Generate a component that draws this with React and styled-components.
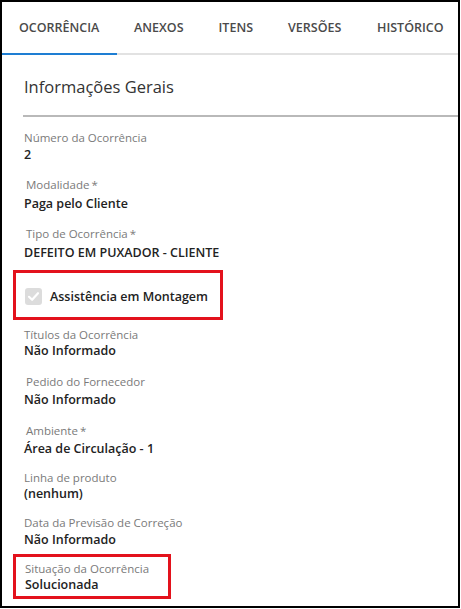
import React from "react";
import styled, { createGlobalStyle } from "styled-components";

const Global = createGlobalStyle`
  html, body { margin: 0; padding: 0; background: #fff; }
  body { font-family: "Open Sans", "DejaVu Sans", sans-serif; }
  * { box-sizing: border-box; }
`;

const Frame = styled.div`
  width: 460px;
  height: 608px;
  border: 2px solid #000;
  background: #fff;
  overflow: hidden;
  display: flex;
  flex-direction: column;
`;

const TabBar = styled.div`
  display: flex;
  height: 53px;
  border-bottom: 2px solid #e2e2e2;
`;

const Tab = styled.div`
  display: flex;
  align-items: center;
  padding: 0 18px 0 17px;
  margin-bottom: -2px;
  border-bottom: 2px solid ${(p) => (p.$active ? "#1e7ed3" : "transparent")};
  font-size: 12.5px;
  font-weight: 600;
  color: #4a4a4a;
  white-space: nowrap;
  width: ${(p) => p.$w}px;
`;

const Content = styled.div`
  padding-left: 21px;
  display: flex;
  flex-direction: column;
`;

const SectionTitle = styled.div`
  font-size: 16.5px;
  color: #333;
  padding-top: 20px;
  height: 62px;
  border-bottom: 2px solid #b9b9b9;
  padding-left: 1px;
`;

const Fields = styled.div`
  display: flex;
  flex-direction: column;
  padding-top: 13px;
`;

const Field = styled.div`
  display: flex;
  flex-direction: column;
  padding-left: 1px;
  height: ${(p) => p.$h}px;
`;

const Label = styled.div`
  font-size: 11.5px;
  color: #7a7a7a;
  line-height: 16px;
  padding-left: ${(p) => (p.$indent ? 2 : 0)}px;
  margin-top: ${(p) => p.$mt || 0}px;
`;

const Star = styled.span`
  margin-left: 2px;
`;

const Value = styled.div`
  font-size: 12.5px;
  font-weight: 600;
  color: #222;
  line-height: 18px;
  margin-top: ${(p) => p.$mt || 0}px;
`;

const Highlight = styled.div`
  border: 3px solid #e3121c;
  margin-left: -10px;
  width: ${(p) => p.$w}px;
  height: ${(p) => p.$h}px;
  padding-left: 9px;
  display: flex;
  flex-direction: ${(p) => (p.$row ? "row" : "column")};
  align-items: ${(p) => (p.$row ? "center" : "stretch")};
  padding-top: ${(p) => p.$pt || 0}px;
  margin-bottom: ${(p) => p.$mb || 0}px;
`;

const CheckRow = styled.div`
  display: flex;
  align-items: center;
  gap: 8px;
`;

const CheckBox = styled.div`
  width: 17px;
  height: 17px;
  border-radius: 3px;
  background: #dcdcdc;
  display: flex;
  align-items: center;
  justify-content: center;
`;

const CheckLabel = styled.span`
  font-size: 12.5px;
  font-weight: 600;
  color: #222;
`;

const tabs = [
  { t: "OCORRÊNCIA", w: 115, active: true },
  { t: "ANEXOS", w: 85 },
  { t: "ITENS", w: 70 },
  { t: "VERSÕES", w: 90 },
  { t: "HISTÓRICO", w: 98 },
];

export default function App() {
  return (
    <>
      <Global />
      <Frame>
        <TabBar>
          {tabs.map((tab) => (
            <Tab key={tab.t} $active={tab.active} $w={tab.w}>
              {tab.t}
            </Tab>
          ))}
        </TabBar>
        <Content>
          <SectionTitle>Informações Gerais</SectionTitle>
          <Fields>
            <Field $h={47}>
              <Label>Número da Ocorrência</Label>
              <Value>2</Value>
            </Field>
            <Field $h={49}>
              <Label $indent>
                Modalidade<Star>*</Star>
              </Label>
              <Value $mt={2}>Paga pelo Cliente</Value>
            </Field>
            <Field $h={44}>
              <Label $indent>
                Tipo de Ocorrência<Star>*</Star>
              </Label>
              <Value $mt={2}>DEFEITO EM PUXADOR - CLIENTE</Value>
            </Field>
            <Highlight $row $w={210} $h={50} $pt={2} $mb={7}>
              <CheckRow>
                <CheckBox>
                  <svg width="13" height="13" viewBox="0 0 13 13">
                    <path
                      d="M2 6.8 L5.1 9.8 L11 3.2"
                      fill="none"
                      stroke="#fff"
                      strokeWidth="2.2"
                      strokeLinecap="round"
                      strokeLinejoin="round"
                    />
                  </svg>
                </CheckBox>
                <CheckLabel>Assistência em Montagem</CheckLabel>
              </CheckRow>
            </Highlight>
            <Field $h={47}>
              <Label>Títulos da Ocorrência</Label>
              <Value $mt={-1}>Não Informado</Value>
            </Field>
            <Field $h={49}>
              <Label $indent>Pedido do Fornecedor</Label>
              <Value $mt={1}>Não Informado</Value>
            </Field>
            <Field $h={47}>
              <Label $indent>
                Ambiente<Star>*</Star>
              </Label>
              <Value $mt={1}>Área de Circulação - 1</Value>
            </Field>
            <Field $h={45}>
              <Label>Linha de produto</Label>
              <Value $mt={-1}>(nenhum)</Value>
            </Field>
            <Field $h={39}>
              <Label>Data da Previsão de Correção</Label>
              <Value>Não Informado</Value>
            </Field>
            <Highlight $w={158} $h={45}>
              <Label $mt={4}>Situação da Ocorrência</Label>
              <Value $mt={-1}>Solucionada</Value>
            </Highlight>
          </Fields>
        </Content>
      </Frame>
    </>
  );
}
